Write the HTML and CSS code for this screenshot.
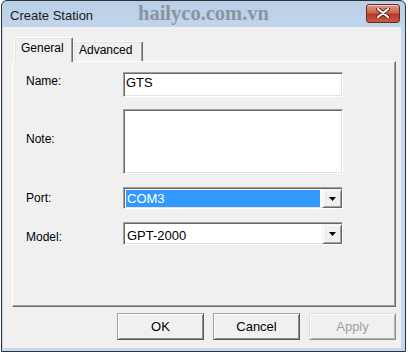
FILE: index.html
```html
<!DOCTYPE html>
<html>
<head>
<meta charset="utf-8">
<link rel="stylesheet" href="styles.css">
</head>
<body>
<div class="window">
  <div class="titlebar">
    <span class="title">Create Station</span>
    <span class="watermark">hailyco.com.vn</span>
    <div class="close">
      <svg width="14" height="10" viewBox="0 0 14 10">
        <path d="M2 1 L12 9 M12 1 L2 9" stroke="#5b2018" stroke-width="4" stroke-linecap="round"/>
        <path d="M2 1 L12 9 M12 1 L2 9" stroke="#ffffff" stroke-width="2.2" stroke-linecap="round"/>
      </svg>
    </div>
  </div>
  <div class="client">
    <div class="tabs">
      <div class="tab active">General</div>
      <div class="tab">Advanced</div>
    </div>
    <div class="panel">
      <div class="form">
        <div class="label">Name:</div>
        <div class="field text">GTS</div>
        <div class="label note">Note:</div>
        <div class="field area"></div>
        <div class="label port">Port:</div>
        <div class="field combo">
          <div class="value selected">COM3</div>
          <div class="arrow"><svg width="7" height="4" viewBox="0 0 7 4"><path d="M0 0 H7 L3.5 4 Z" fill="#000"/></svg></div>
        </div>
        <div class="label model">Model:</div>
        <div class="field combo model-combo">
          <div class="value">GPT-2000</div>
          <div class="arrow"><svg width="7" height="4" viewBox="0 0 7 4"><path d="M0 0 H7 L3.5 4 Z" fill="#000"/></svg></div>
        </div>
      </div>
    </div>
    <div class="buttons">
      <div class="btn default">OK</div>
      <div class="btn">Cancel</div>
      <div class="btn disabled">Apply</div>
    </div>
  </div>
</div>
</body>
</html>
```
FILE: styles.css
```css
* { box-sizing: border-box; }
body {
  margin: 0;
  background: #ffffff;
  font-family: "Liberation Sans", Arial, sans-serif;
  color: #000;
}
.window {
  margin-left: 1px;
  width: 405px;
  height: 352px;
  border: 1px solid #2e3338;
  border-radius: 6px 6px 0 0;
  background: linear-gradient(#b8cfe7, #c6d9ed 40px, #c3d8ee);
  padding: 0 4px 3px 1px;
  display: flex;
  flex-direction: column;
}
.titlebar {
  position: relative;
  height: 26px;
  display: flex;
  align-items: center;
  padding: 0 1px 0 7px;
}
.title {
  font-size: 13px;
  color: #1b1b1b;
  margin-top: 2px;
}
.watermark {
  position: absolute;
  left: 135px;
  top: 1px;
  font-family: "Liberation Serif", "Times New Roman", serif;
  font-weight: bold;
  font-size: 20.5px;
  color: #8b949e;
}
.close {
  margin-left: auto;
  margin-top: -2px;
  width: 34px;
  height: 19px;
  border: 1px solid #6a2a22;
  border-radius: 3px;
  background: linear-gradient(#e0998a, #cc6550 45%, #b93a24 55%, #c85a42);
  display: flex;
  align-items: center;
  justify-content: center;
  box-shadow: inset 0 1px 0 rgba(255,255,255,0.5);
}
.client {
  flex: 1;
  background: #f0f0f0;
  display: flex;
  flex-direction: column;
}
.tabs {
  display: flex;
  align-items: flex-end;
  margin: 10px 0 0 11px;
  height: 24px;
  position: relative;
  z-index: 1;
}
.tab {
  font-size: 12px;
  height: 20px;
  line-height: 17px;
  padding: 0 6px;
  border-top: 1px solid #ffffff;
  border-left: 1px solid #ffffff;
  border-right: 1px solid #696969;
  border-radius: 2px 2px 0 0;
  box-shadow: inset -1px 0 0 #a0a0a0, inset 1px 1px 0 #e3e3e3;
  background: #f0f0f0;
}
.tab.active {
  height: 25px;
  width: 59px;
  margin-bottom: -1px;
  line-height: 21px;
  padding-left: 6px;
}
.tab:not(.active) {
  width: 70px;
  padding-left: 5px;
}
.panel {
  margin-left: 9px;
  width: 384px;
  height: 246px;
  border: 1px solid;
  border-color: #ffffff #696969 #696969 #ffffff;
  box-shadow: inset -1px -1px 0 #a0a0a0;
}
.form {
  display: grid;
  grid-template-columns: 97px 220px;
  grid-template-rows: 25px 65px 24px 23px;
  row-gap: 12px;
  padding: 10px 0 0 13px;
}
.label {
  font-size: 12px;
  line-height: 14px;
  align-self: start;
  margin-top: 2px;
}
.label.note { margin-top: 23px; }
.label.port { margin-top: 5px; }
.label.model { margin-top: 8px; }
.field {
  background: #ffffff;
  border: 1px solid;
  border-color: #a0a0a0 #ffffff #ffffff #a0a0a0;
  box-shadow: inset 1px 1px 0 #696969, inset -1px -1px 0 #e3e3e3;
  padding: 1px;
  font-size: 13px;
}
.text {
  line-height: 18px;
  padding-left: 2px;
}
.combo {
  height: 22px;
  display: flex;
  align-self: start;
  margin-top: 1px;
}
.model-combo { height: 23px; margin-top: 0; }
.value {
  flex: 1;
  margin: 1px 1px 0 1px;
  padding-left: 1px;
  line-height: 17px;
}
.value.selected {
  background: #3399ff;
  color: #ffffff;
}
.model-combo .value { line-height: 21px; }
.arrow {
  width: 20px;
  margin: 0 -1px -1px 1px;
  background: #f0f0f0;
  border: 1px solid;
  border-color: #f0f0f0 #696969 #696969 #f0f0f0;
  box-shadow: inset 1px 1px 0 #ffffff, inset -1px -1px 0 #a0a0a0;
  display: flex;
  align-items: center;
  justify-content: center;
}
.buttons {
  display: flex;
  justify-content: flex-end;
  gap: 9px;
  margin-top: 6px;
  padding-right: 5px;
}
.btn {
  width: 87px;
  height: 27px;
  font-size: 13px;
  line-height: 25px;
  text-align: center;
  background: #f0f0f0;
  border: 1px solid;
  border-color: #a0a0a0 #555555 #555555 #a0a0a0;
  box-shadow: inset 1px 1px 0 #ffffff, inset -1px -1px 0 #8a8a8a;
}
.btn.disabled {
  color: #a0a0a0;
  border-color: #dcdcdc #8f8f8f #8f8f8f #dcdcdc;
  box-shadow: inset 1px 1px 0 #ffffff, inset -1px -1px 0 #b4b4b4;
}
```
